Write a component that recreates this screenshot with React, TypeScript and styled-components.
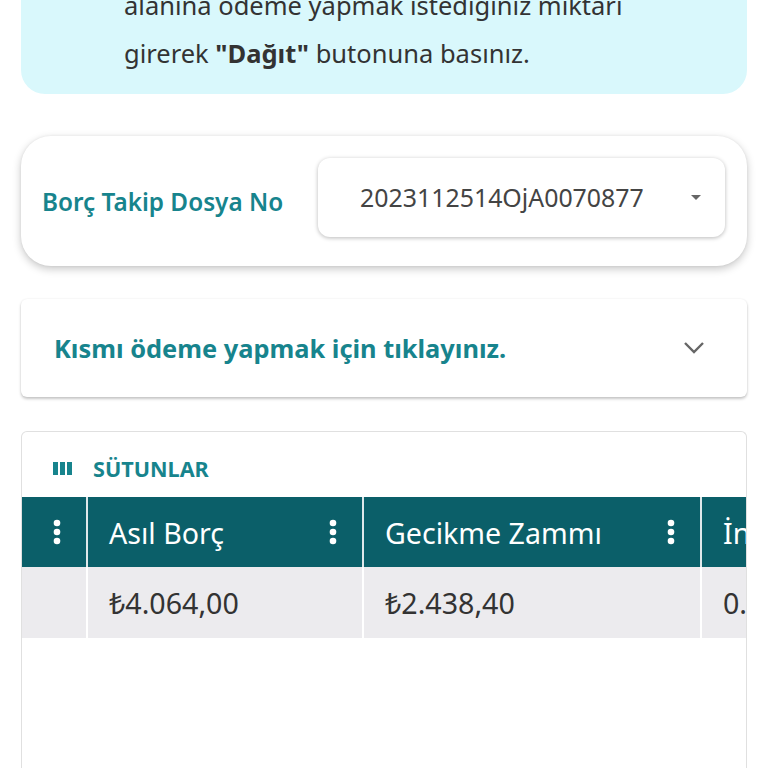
import * as React from "react";
import styled, { createGlobalStyle } from "styled-components";

const Colors = {
    teal: "#17848d",
    headerTeal: "#0b5f69",
    infoBg: "#d9f8fc",
    text: "#333333",
    rowBg: "#ecebee",
};

const GlobalStyle = createGlobalStyle`
    html, body {
        margin: 0;
        padding: 0;
        background: #ffffff;
        overflow: hidden;
    }
    body {
        font-family: "Noto Sans", "Open Sans", sans-serif;
        color: ${Colors.text};
    }
`;

const Page = styled.div`
    width: 768px;
    height: 768px;
    overflow: hidden;
    padding: 0 21px;
    box-sizing: border-box;
    display: flex;
    flex-direction: column;
`;

const InfoBox = styled.div`
    margin-top: -35px;
    background: ${Colors.infoBg};
    border-radius: 0 0 24px 24px;
    padding: 16px 20px 17px 103px;
    font-size: 25.5px;
    line-height: 48px;
    color: ${Colors.text};
    white-space: nowrap;
`;

const Card = styled.div`
    margin-top: 42px;
    height: 130px;
    box-sizing: border-box;
    background: #fff;
    border-radius: 30px;
    box-shadow: 0 3px 8px rgba(0, 0, 0, 0.22), 0 0 3px rgba(0, 0, 0, 0.06);
    display: flex;
    align-items: center;
    justify-content: space-between;
    padding: 0 22px 8px 21px;
`;

const Label = styled.span`
    font-size: 24.3px;
    font-weight: 600;
    color: ${Colors.teal};
    padding-top: 8px;
    white-space: nowrap;
`;

const Select = styled.div`
    width: 407px;
    height: 79px;
    box-sizing: border-box;
    border-radius: 12px;
    box-shadow: 0 1px 4px rgba(0, 0, 0, 0.28);
    display: flex;
    align-items: center;
    padding: 0 24px 0 42px;
    font-size: 24.9px;
    color: #444;
`;

const SelectValue = styled.span`
    flex: 1;
`;

const Caret = styled.span`
    width: 0;
    height: 0;
    border-left: 5px solid transparent;
    border-right: 5px solid transparent;
    border-top: 5px solid #666;
`;

const Accordion = styled.div`
    margin-top: 33px;
    height: 98px;
    box-sizing: border-box;
    background: #fff;
    border-radius: 6px;
    box-shadow: 0 2px 3px rgba(0, 0, 0, 0.22), 0 0 2px rgba(0, 0, 0, 0.08);
    display: flex;
    align-items: center;
    justify-content: space-between;
    padding: 0 42px 0 33px;
`;

const AccordionTitle = styled.span`
    font-size: 25.4px;
    font-weight: 700;
    color: ${Colors.teal};
    white-space: nowrap;
`;

const TableCard = styled.div`
    margin-top: 34px;
    flex: 1;
    min-height: 0;
    border: 1px solid #e0e0e0;
    border-bottom: none;
    border-radius: 6px 6px 0 0;
    background: #fff;
    overflow: hidden;
    display: flex;
    flex-direction: column;
`;

const Toolbar = styled.div`
    height: 65px;
    display: flex;
    align-items: center;
    gap: 21px;
    padding: 8px 0 0 31px;
    box-sizing: border-box;
    font-size: 21.6px;
    font-weight: 700;
    color: ${Colors.teal};
`;

const Row = styled.div<{ $header?: boolean }>`
    display: grid;
    grid-template-columns: 64px 274px 336px 120px;
    gap: 2px;
    height: ${p => (p.$header ? 70 : 71)}px;
    background: ${p => (p.$header ? "#dfe8ea" : "#ffffff")};
    white-space: nowrap;
`;

const Cell = styled.div<{ $header?: boolean }>`
    background: ${p => (p.$header ? Colors.headerTeal : Colors.rowBg)};
    color: ${p => (p.$header ? "#ffffff" : Colors.text)};
    font-size: 28.6px;
    display: flex;
    align-items: center;
    justify-content: space-between;
    padding: 0 25px 0 21px;
    overflow: hidden;
`;

const IconCell = styled(Cell)`
    justify-content: center;
    padding: 0 0 0 6px;
`;

const Kebab = () => (
    <svg width="8" height="26" viewBox="0 0 8 26">
        <circle cx="4" cy="4" r="3.3" fill="#fff" />
        <circle cx="4" cy="13" r="3.3" fill="#fff" />
        <circle cx="4" cy="22" r="3.3" fill="#fff" />
    </svg>
);

const ColumnsIcon = () => (
    <svg width="19" height="13" viewBox="0 0 19 13">
        <rect x="0" y="0" width="5" height="13" fill={Colors.teal} />
        <rect x="7" y="0" width="5" height="13" fill={Colors.teal} />
        <rect x="14" y="0" width="5" height="13" fill={Colors.teal} />
    </svg>
);

const Chevron = () => (
    <svg width="22" height="14" viewBox="0 0 22 14">
        <path d="M2 2 L11 11 L20 2" stroke="#666" strokeWidth="2.4" fill="none" />
    </svg>
);

export default function App() {
    return (
        <>
            <GlobalStyle />
            <Page>
                <InfoBox>
                    alanına ödeme yapmak istediğiniz miktarı
                    <br />
                    girerek <b>"Dağıt"</b> butonuna basınız.
                </InfoBox>
                <Card>
                    <Label>Borç Takip Dosya No</Label>
                    <Select>
                        <SelectValue>2023112514OjA0070877</SelectValue>
                        <Caret />
                    </Select>
                </Card>
                <Accordion>
                    <AccordionTitle>Kısmı ödeme yapmak için tıklayınız.</AccordionTitle>
                    <Chevron />
                </Accordion>
                <TableCard>
                    <Toolbar>
                        <ColumnsIcon />
                        SÜTUNLAR
                    </Toolbar>
                    <Row $header>
                        <IconCell $header>
                            <Kebab />
                        </IconCell>
                        <Cell $header>
                            Asıl Borç
                            <Kebab />
                        </Cell>
                        <Cell $header>
                            Gecikme Zammı
                            <Kebab />
                        </Cell>
                        <Cell $header>İnceleme</Cell>
                    </Row>
                    <Row>
                        <Cell />
                        <Cell>₺4.064,00</Cell>
                        <Cell>₺2.438,40</Cell>
                        <Cell>0.00</Cell>
                    </Row>
                </TableCard>
            </Page>
        </>
    );
}
